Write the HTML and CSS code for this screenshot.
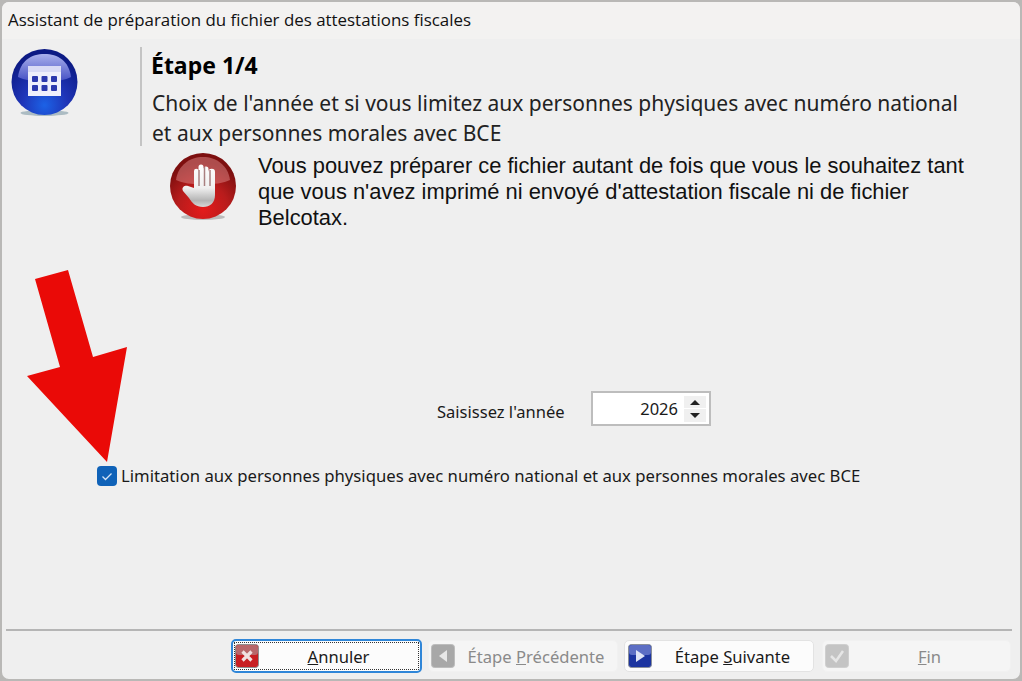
FILE: index.html
```html
<!DOCTYPE html>
<html lang="fr">
<head>
<meta charset="utf-8">
<title>Assistant</title>
<link rel="stylesheet" href="styles.css">
</head>
<body>
<div class="window">
  <header class="titlebar">Assistant de préparation du fichier des attestations fiscales</header>
  <main class="content">
    <section class="head">
      <svg class="ico-cal" viewBox="0 0 68 68" width="68" height="68">
        <defs>
          <radialGradient id="blue" cx="50%" cy="85%" r="75%"><stop offset="0" stop-color="#1c62e6"/><stop offset=".45" stop-color="#1f35b8"/><stop offset="1" stop-color="#0c1a84"/></radialGradient>
          <linearGradient id="gloss" x1="0" y1="0" x2="0" y2="1"><stop offset="0" stop-color="#a9b0ec"/><stop offset="1" stop-color="#4450c4"/></linearGradient>
        </defs>
        <ellipse cx="33.500" cy="64" rx="24" ry="3" fill="#7f9aa5" opacity=".6"/>
        <circle cx="33.500" cy="33" r="33" fill="url(#blue)"/>
        <path d="M7 28C9 12 20 5 33.500 5S58 12 60 28C50 34 18 34 7 28Z" fill="url(#gloss)"/>
        <rect x="17" y="17" width="33" height="30" fill="#eef0fb"/>
        <rect x="17" y="17" width="33" height="6" fill="#d8dbf5"/>
        <g fill="#2b39ad"><rect x="21" y="27" width="6" height="6" rx="1"/><rect x="30.500" y="27" width="6" height="6" rx="1"/><rect x="40" y="27" width="6" height="6" rx="1"/><rect x="21" y="36" width="6" height="6" rx="1"/><rect x="30.500" y="36" width="6" height="6" rx="1"/><rect x="40" y="36" width="6" height="6" rx="1"/></g>
      </svg>
      <div class="steptext">
        <h1 class="steptitle">Étape 1/4</h1>
        <p class="stepdesc">Choix de l'année et si vous limitez aux personnes physiques avec numéro national<br>et aux personnes morales avec BCE</p>
      </div>
    </section>
    <section class="notice">
      <svg class="ico-stop" viewBox="0 0 68 68" width="68" height="68">
        <defs>
          <radialGradient id="red" cx="50%" cy="85%" r="70%"><stop offset="0" stop-color="#e41b1b"/><stop offset=".55" stop-color="#b81c1c"/><stop offset="1" stop-color="#7d0f0f"/></radialGradient>
          <linearGradient id="hand" x1="0" y1="0" x2="0" y2="1"><stop offset="0" stop-color="#ffffff"/><stop offset=".55" stop-color="#f0f0f0"/><stop offset=".85" stop-color="#b4b4b4"/><stop offset="1" stop-color="#d8d8d8"/></linearGradient>
        </defs>
        <ellipse cx="33" cy="64" rx="22" ry="3" fill="#999" opacity=".6"/>
        <circle cx="33" cy="33" r="33" fill="url(#red)"/>
        <path d="M6 27C8 12 20 4 33 4S58 12 60 27C48 33 18 33 6 27Z" fill="#e08a8a" opacity=".5"/>
        <path d="M24 35V18a2.200 2.200 0 0 1 4.500 0V14a2.200 2.200 0 0 1 5 0V16a2.200 2.200 0 0 1 5 0V19a2.200 2.200 0 0 1 6.500 0V42C45 50 40 54 33 54C26 54 22 50 19 45L13 38C11 34 15 32 18 33Z" fill="url(#hand)"/>
        <path d="M29 17V33M34.500 14V33M40 17V33" stroke="#a98080" stroke-width="1.500"/>
      </svg>
      <p class="noticetext">Vous pouvez préparer ce fichier autant de fois que vous le souhaitez tant<br>que vous n'avez imprimé ni envoyé d'attestation fiscale ni de fichier<br>Belcotax.</p>
    </section>
    <section class="year">
      <label class="yearlabel">Saisissez l'année</label>
      <div class="spin">
        <span class="spinval">2026</span>
        <span class="spinbtns"><span class="up"></span><span class="down"></span></span>
      </div>
    </section>
    <section class="limit">
      <span class="check"><svg viewBox="0 0 20 20" width="20" height="20"><path d="M5.500 10.500L8.500 13.500L14.500 7.500" fill="none" stroke="#d5e4f6" stroke-width="1.300"/></svg></span>
      <span class="limittext">Limitation aux personnes physiques avec numéro national et aux personnes morales avec BCE</span>
    </section>
  </main>
  <footer class="footer">
    <div class="btn default"><span class="focus"><svg class="bico" viewBox="0 0 24 24" width="24" height="24"><rect x=".5" y=".5" width="23" height="23" rx="3" fill="#c81e22" stroke="#8f8f8f"/><rect x="1" y="1" width="22" height="10" rx="3" fill="#b8676a"/><path d="M7.500 7.500L16.500 16.500M16.500 7.500L7.500 16.500" stroke="#f0e0e0" stroke-width="3.200"/></svg><span class="blabel"><u>A</u>nnuler</span></span></div>
    <div class="btn off"><svg class="bico" viewBox="0 0 24 24" width="24" height="24"><rect x=".5" y=".5" width="23" height="23" rx="3" fill="#a8a8a8" stroke="#bdbdbd"/><path d="M16 6V18L8 12Z" fill="#e8e8e8"/></svg><span class="blabel">Étape <u>P</u>récédente</span></div>
    <div class="btn"><svg class="bico" viewBox="0 0 24 24" width="24" height="24"><rect x=".5" y=".5" width="23" height="23" rx="3" fill="#1c34a0" stroke="#8a8f9a"/><rect x="1" y="1" width="22" height="10" rx="3" fill="#5c6ec4"/><path d="M8 6V18L17 12Z" fill="#dfe4f6"/></svg><span class="blabel">Étape <u>S</u>uivante</span></div>
    <div class="btn off"><svg class="bico" viewBox="0 0 24 24" width="24" height="24"><rect x=".5" y=".5" width="23" height="23" rx="3" fill="#c4c4c4" stroke="#cfcfcf"/><path d="M6 12L11 17L18 7" fill="none" stroke="#e6e6e6" stroke-width="2.500"/></svg><span class="blabel"><u>F</u>in</span></div>
  </footer>
  <svg class="arrow" viewBox="0 0 1022 681" width="1022" height="681"><polygon points="35,279 68,270 93,357 127,347 107,462 27,376 60,367" fill="#ea0a07"/></svg>
</div>
</body>
</html>
```
FILE: styles.css
```css
* { box-sizing: border-box; }
html, body { margin: 0; padding: 0; }
body { width: 1022px; height: 681px; overflow: hidden; background: #b9b8b6; font-family: "Noto Sans", sans-serif; color: #1a1a1a; }
.window { position: relative; width: 1022px; height: 681px; background: #efefef; border: 2px solid #b9b8b6; border-radius: 9px; display: flex; flex-direction: column; overflow: hidden; }
.titlebar { height: 37px; flex: none; background: #f3f2f1; padding: 8px 0 0 6px; font: 16.900px/20px "Open Sans", sans-serif; color: #111; white-space: nowrap; }
.content { flex: 1; display: flex; flex-direction: column; min-height: 0; }
.head { display: flex; height: 100px; padding: 8px 0 0 7px; }
.ico-cal { margin: 2px 0 0 2px; flex: none; }
.steptext { margin: 0 0 0 61px; border-left: 2px solid #c4c4c4; padding: 0 0 0 9px; height: 99px; }
.steptitle { margin: 4px 0 0; font-size: 23px; line-height: 28px; font-weight: 700; color: #000; }
.stepdesc { margin: 9px 0 0 1px; font-size: 21px; line-height: 30px; color: #222; white-space: nowrap; }
.notice { display: flex; padding: 14px 0 0 168px; }
.ico-stop { flex: none; }
.noticetext { margin: 0 0 0 20px; font-family: "Liberation Sans", sans-serif; font-size: 21.900px; line-height: 26px; color: #111; white-space: nowrap; }
.year { display: flex; align-items: center; padding: 160px 0 0 435px; }
.yearlabel { font-size: 16.550px; width: 154px; padding-top: 5px; }
.spin { width: 120px; height: 35px; background: #fff; border: 2px solid #bdbdbd; display: flex; align-items: center; justify-content: flex-end; }
.spinval { font-size: 16.500px; margin-right: 6px; }
.spinbtns { width: 22px; height: 26px; display: flex; flex-direction: column; margin-right: 3px; background: #f0f0f0; }
.up, .down { flex: 1; position: relative; }
.down { border-top: 1px solid #fff; }
.up::after, .down::after { content: ""; position: absolute; left: 6px; border: 5px solid transparent; }
.up::after { border-bottom: 5px solid #222; border-top-width: 0; top: 4px; }
.down::after { top: 4px; border-top: 5px solid #222; border-bottom-width: 0; }
.limit { display: flex; align-items: center; padding: 38px 0 0 95px; }
.check { width: 20px; height: 20px; background: #0f62b8; border-radius: 4px; flex: none; display: block; }
.check svg { display: block; }
.limittext { font-size: 16.700px; margin-left: 4px; white-space: nowrap; }
.footer { flex: none; height: 50px; margin: 0 8px 0 4px; border-top: 2px solid #b5b5b5; display: flex; align-items: flex-start; padding: 8px 0 0 225px; }
.btn { height: 32px; margin-top: 1px; background: #fcfcfc; border: 1px solid #e3e3e3; border-radius: 5px; flex: none; display: flex; align-items: center; padding-left: 3px; font-size: 16.600px; }
.btn:nth-child(1) { width: 191px; }
.btn:nth-child(2) { width: 190px; margin-left: 6px; }
.btn:nth-child(3) { width: 190px; margin-left: 6px; }
.btn:nth-child(4) { width: 189px; margin-left: 8px; }
.bico { flex: none; }
.blabel { flex: 1; text-align: center; white-space: nowrap; }
.off { background: #f5f5f5; color: #8a8a8a; border-color: #f1f1f1; padding-left: 2px; }
.default { height: 34px; margin-top: 0; border: 2px solid #2f86d8; padding: 1px; }
.focus { display: flex; align-items: center; width: 100%; height: 100%; border: 1px dotted #333; }
.arrow { position: absolute; left: -2px; top: -2px; pointer-events: none; }
```
